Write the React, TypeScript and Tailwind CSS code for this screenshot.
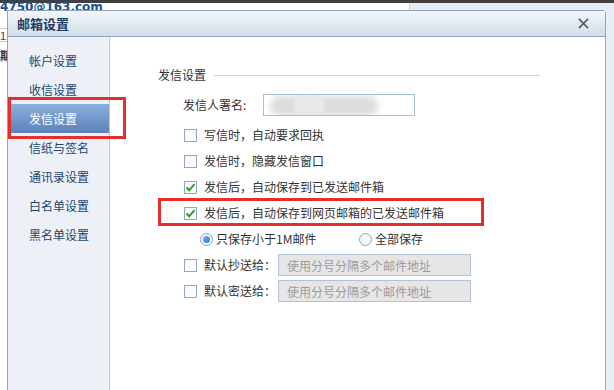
import React from "react";

const font = { fontFamily: '"Microsoft YaHei", "Noto Sans CJK SC", "Noto Sans", sans-serif' };

const menu = ["帐户设置", "收信设置", "发信设置", "信纸与签名", "通讯录设置", "白名单设置", "黑名单设置"];

const Check = ({ on }: { on?: boolean }) => (
  <span className="relative w-[13px] h-[13px] border border-[#8ea8c6] bg-gradient-to-br from-[#f4f7fb] to-white shrink-0">
    {on && (
      <svg viewBox="0 0 13 13" className="absolute -left-px -top-px w-[13px] h-[13px]">
        <path d="M2.5 6.5 L5.2 9.3 L10.5 3.2" fill="none" stroke="#2e9a35" strokeWidth="2" />
      </svg>
    )}
  </span>
);

const Radio = ({ on }: { on?: boolean }) => (
  <span className="w-[13px] h-[13px] rounded-full border border-[#8ca3bf] bg-gradient-to-br from-[#eef2f7] to-white flex items-center justify-center shrink-0">
    {on && <span className="w-[7px] h-[7px] rounded-full bg-gradient-to-br from-[#6fb0f2] to-[#2f7bd4]" />}
  </span>
);

const CheckRow = ({ on, text }: { on?: boolean; text: string }) => (
  <div className="h-[26px] flex items-center gap-[7px] pl-[26px]">
    <Check on={on} />
    <span>{text}</span>
  </div>
);

const AddrRow = ({ label }: { label: string }) => (
  <div className="h-[26px] flex items-center pl-[26px]">
    <Check />
    <span className="ml-[7px] w-[74px]">{label}</span>
    <div className="w-[193px] h-[22px] border border-[#b3c3d6] bg-[#e6e6e6] text-[#9b9b9b] pl-[8px] leading-[21px]">
      使用分号分隔多个邮件地址
    </div>
  </div>
);

export default function App() {
  return (
    <div className="relative w-[614px] h-[390px] overflow-hidden bg-white text-[12px] text-[#333]" style={font}>
      {/* page behind the dialog */}
      <div className="h-[3px] bg-[#3f3f3f]" />
      <div className="flex h-[7px]">
        <div className="w-[410px] bg-white border-r border-[#c8d2de]" />
        <div className="flex-1 bg-[#e7edf5]" />
      </div>
      <div className="absolute left-0 -top-[2px] text-[12px] font-bold text-[#1b4f8f]" style={{ fontFamily: "Verdana, 'DejaVu Sans', sans-serif" }}>
        4750@163.com
      </div>
      <div className="absolute left-0 top-[28px] w-[7px] h-[14px] border-y border-[#c5c5c5] text-[11px] leading-[12px] text-[#444] overflow-hidden">1:</div>
      <div className="absolute left-0 top-[49px] w-[7px] h-[14px] overflow-hidden bg-[#eee] text-[11px] leading-[13px] font-bold">期</div>
      <div className="absolute right-0 top-[10px] w-[8px] h-[380px] bg-[#e8eef6]" />

      {/* dialog */}
      <div className="absolute left-[7px] top-[10px] w-[599px] h-[400px] border border-[#8ea3bd] rounded-tr-[3px] bg-white flex flex-col">
        <div className="h-[26px] shrink-0 flex items-center justify-between px-[9px] bg-gradient-to-b from-[#f3f6f9] to-[#d3dde8] border-b border-[#8fa6c2]">
          <span className="text-[13px] text-[#1e3d66] font-bold">邮箱设置</span>
          <svg viewBox="0 0 12 12" className="w-[11px] h-[11px] mr-[7px]">
            <path d="M1 1 L11 11 M11 1 L1 11" stroke="#555d66" strokeWidth="1.8" />
          </svg>
        </div>
        <div className="flex flex-1">
          <div className="w-[102px] bg-[#edf1f7] border-r border-[#b7c7da] pt-[9px]">
            {menu.map((m, i) => (
              <div
                key={m}
                className={`h-[29px] flex items-center pl-[21px] text-[#22446e] ${
                  i === 2 ? "bg-gradient-to-b from-[#8bb0db] to-[#5a82ba] text-white" : ""
                }`}
              >
                {m}
              </div>
            ))}
          </div>
          <div className="flex-1 pl-[48px] pt-[30px]">
            <div className="flex items-center gap-[8px] h-[16px]">
              <span>发信设置</span>
              <div className="w-[326px] h-px bg-[#c4d2e2]" />
            </div>
            <div className="flex items-center h-[22px] mt-[11px] pl-[25px]">
              <span className="w-[80px]">发信人署名:</span>
              <div className="relative w-[152px] h-[22px] border border-[#a9bdd4] overflow-hidden">
                <div className="absolute left-[6px] top-[1px] w-[108px] h-[20px] rounded-full bg-[#dcdcdc] blur-[3px]" />
                <div className="absolute left-[30px] top-[2px] w-[30px] h-[16px] bg-[#e9e9e9] blur-[2px]" />
              </div>
            </div>
            <div className="mt-[6px]">
              <CheckRow text="写信时，自动要求回执" />
              <CheckRow text="发信时，隐藏发信窗口" />
              <CheckRow on text="发信后，自动保存到已发送邮件箱" />
              <CheckRow on text="发信后，自动保存到网页邮箱的已发送邮件箱" />
            </div>
            <div className="h-[26px] flex items-center pl-[42px]">
              <Radio on />
              <span className="ml-[3px] w-[143px]">只保存小于1M邮件</span>
              <Radio />
              <span className="ml-[3px]">全部保存</span>
            </div>
            <AddrRow label="默认抄送给：" />
            <AddrRow label="默认密送给：" />
          </div>
        </div>
      </div>

      {/* red highlight boxes */}
      <div className="absolute left-[8px] top-[97px] w-[118px] h-[42px] border-[3px] border-[#e52e2e]" />
      <div className="absolute left-[158px] top-[198px] w-[326px] h-[28px] border-[3px] border-[#e52e2e]" />
    </div>
  );
}
